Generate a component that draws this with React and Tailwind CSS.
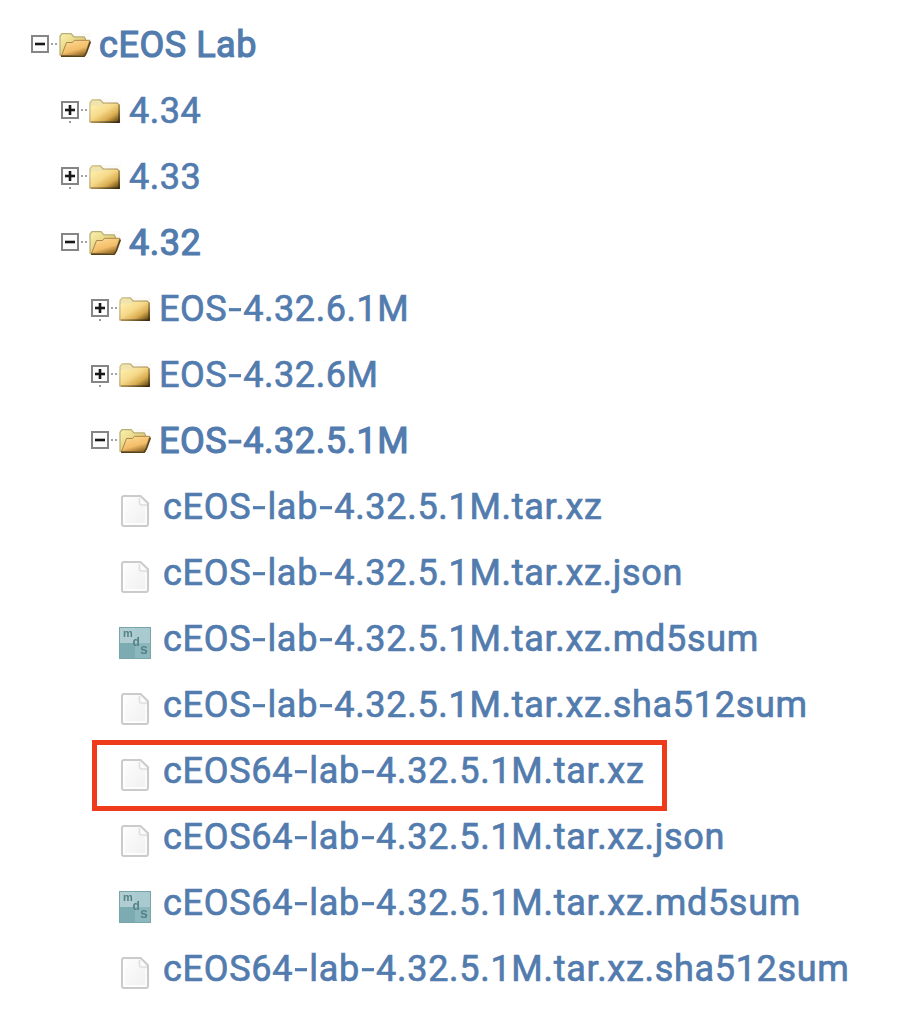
import React, { Fragment } from "react";

const tree = [
  { level: 0, type: "folder", open: true, name: "cEOS Lab" },
  { level: 1, type: "folder", name: "4.34" },
  { level: 1, type: "folder", name: "4.33" },
  { level: 1, type: "folder", open: true, name: "4.32" },
  { level: 2, type: "folder", name: "EOS-4.32.6.1M" },
  { level: 2, type: "folder", name: "EOS-4.32.6M" },
  { level: 2, type: "folder", open: true, name: "EOS-4.32.5.1M" },
  { type: "file", name: "cEOS-lab-4.32.5.1M.tar.xz" },
  { type: "file", name: "cEOS-lab-4.32.5.1M.tar.xz.json" },
  { type: "md5", name: "cEOS-lab-4.32.5.1M.tar.xz.md5sum" },
  { type: "file", name: "cEOS-lab-4.32.5.1M.tar.xz.sha512sum" },
  { type: "file", name: "cEOS64-lab-4.32.5.1M.tar.xz", highlighted: true },
  { type: "file", name: "cEOS64-lab-4.32.5.1M.tar.xz.json" },
  { type: "md5", name: "cEOS64-lab-4.32.5.1M.tar.xz.md5sum" },
  { type: "file", name: "cEOS64-lab-4.32.5.1M.tar.xz.sha512sum" },
];

const indent = ["pl-7", "pl-[58px]", "pl-[88px]"];

function Gradients() {
  return (
    <svg width="0" height="0" className="absolute" aria-hidden="true">
      <defs>
        <linearGradient id="closed" x1="0" y1="0" x2="1" y2="1">
          <stop offset="0" stopColor="#fff3b0" />
          <stop offset="0.45" stopColor="#f6d98a" />
          <stop offset="0.72" stopColor="#d9ac50" />
          <stop offset="1" stopColor="#5f430f" />
        </linearGradient>
        <linearGradient id="back" x1="0" y1="0" x2="1" y2="1">
          <stop offset="0" stopColor="#fbf3b0" />
          <stop offset="0.6" stopColor="#e2cd78" />
          <stop offset="1" stopColor="#8f7424" />
        </linearGradient>
        <linearGradient id="front" x1="0.2" y1="0" x2="0.75" y2="1">
          <stop offset="0" stopColor="#fddb92" />
          <stop offset="0.6" stopColor="#f3bd69" />
          <stop offset="1" stopColor="#8b611f" />
        </linearGradient>
        <linearGradient id="rim" x1="0" y1="0" x2="1" y2="1">
          <stop offset="0" stopColor="#cfc58d" />
          <stop offset="0.6" stopColor="#a28347" />
          <stop offset="1" stopColor="#352507" />
        </linearGradient>
        <linearGradient id="paper" x1="0" y1="0" x2="1" y2="1">
          <stop offset="0" stopColor="#fefefe" />
          <stop offset="1" stopColor="#efefef" />
        </linearGradient>
      </defs>
    </svg>
  );
}

function Toggle({ open }) {
  return (
    <svg width="30" height="32" viewBox="0 0 30 32" className="mb-[1.5px] shrink-0 blur-[0.45px]">
      <rect x="4" y="8" width="16" height="16" fill="#fcfcfc" stroke="#858585" strokeWidth="2" />
      <path d="M7 16h10" stroke="#181818" strokeWidth="2.6" />
      {!open && <path d="M12 11v10" stroke="#181818" strokeWidth="2.6" />}
      <path d="M23 16h2M27 16h2" stroke="#a2a2a2" strokeWidth="1.8" />
      {!open && <path d="M11 28h2" stroke="#999" strokeWidth="1.8" />}
    </svg>
  );
}

function Folder({ open }) {
  return (
    <svg width="34" height="32" viewBox="0 0 34 32" className="mb-[1.5px] shrink-0 blur-[0.55px]">
      <path d="M1 5h32v24H1z" fill="#fdfbf7" />
      {open ? (
        <>
          <path d="M2 27.2V8.3L4 5.7h9l3 3.2h10.2l1.3 2v16.3z" fill="url(#back)" stroke="#b5ac76" strokeWidth="1.2" />
          <path d="M3.5 27.5 8.5 14.5h6l2-2.2h15.4L26.5 27.5z" fill="url(#front)" stroke="#a9874d" strokeWidth="1" />
          <path d="M3 28.2h23.2l2.2-3.5 4-11.2" fill="none" stroke="#554018" strokeWidth="1.6" />
        </>
      ) : (
        <>
          <path d="M2 28V8.6L4.2 5.8h8.1l3 3.3h13.9l1.8 1.8V28z" fill="#efe3ae" stroke="url(#rim)" strokeWidth="1.2" />
          <path d="M2.6 27.6V12.7L4 11.5h9.4l2.8-1.7h13.5l.8 1v16.8z" fill="url(#closed)" />
          <path d="M31 10.5v17.6H3" fill="none" stroke="url(#rim)" strokeWidth="1.7" />
        </>
      )}
    </svg>
  );
}

function Page() {
  return (
    <svg width="32" height="32" viewBox="0 0 32 32" className="mt-2 shrink-0 blur-[0.5px]">
      <path d="M4.5 1h17L29 8.2V29a2 2 0 0 1-2 2H5a2 2 0 0 1-2-2V3a2 2 0 0 1 1.5-2z" fill="url(#paper)" stroke="#cbcbcb" strokeWidth="2.1" />
      <path d="M20.8 2v5.7q0 1.8 1.8 1.8H28z" fill="#fcfcfc" />
      <path d="M20.5 3v5q0 2 2 2H28" fill="none" stroke="#dedede" strokeWidth="1.6" />
      <path d="M5 3v26h22V12" fill="none" stroke="#fff" strokeWidth="1.4" />
    </svg>
  );
}

function Checksum() {
  return (
    <div className="relative mt-2 grid size-8 shrink-0 grid-cols-2 grid-rows-2 border border-[#79a4a9] font-['Liberation_Sans',sans-serif] leading-none font-bold tracking-normal text-[#568187] blur-[0.4px]">
      <span className="bg-[#b0ced1]" />
      <span className="bg-[#a9cbd0]" />
      <span className="bg-[#7cabb1]" />
      <span className="bg-[#8bb8bd]" />
      <span className="absolute top-0 left-[3px] text-[11px]">m</span>
      <span className="absolute top-[8px] left-[12.5px] text-[12px]">d</span>
      <span className="absolute top-[14px] left-[20px] text-[14px]">s</span>
    </div>
  );
}

function Label({ text }) {
  return text.split("-").map((part, i) => (
    <Fragment key={i}>
      {i > 0 && <span className="mr-[2.5px] ml-[3px] inline-block scale-x-130">-</span>}
      {part}
    </Fragment>
  ));
}

function Row({ item }) {
  const isFolder = item.type === "folder";
  return (
    <li className={`relative flex h-[66px] items-center ${isFolder ? indent[item.level] : "pl-[119px]"}`}>
      {isFolder ? (
        <>
          <Toggle open={item.open} />
          <Folder open={item.open} />
        </>
      ) : item.type === "md5" ? (
        <Checksum />
      ) : (
        <Page />
      )}
      <span
        className={`whitespace-nowrap ${isFolder ? "pl-[7px] tracking-[0.55px]" : "pl-3 tracking-[0.7px]"} ${
          item.open ? "[-webkit-text-stroke:1.2px_#527bae]" : "[-webkit-text-stroke:0.7px_#527bae]"
        }`}
      >
        <Label text={item.name} />
      </span>
      {item.highlighted && (
        <span className="absolute top-0.5 left-[92px] h-[71px] w-[575px] border-5 border-[#ee3b1c]" />
      )}
    </li>
  );
}

export default function App() {
  return (
    <main className="h-[1014px] w-[914px] overflow-hidden bg-white pt-3 font-['Roboto',sans-serif] text-[36px] leading-[66px] text-[#527bae]">
      <Gradients />
      <ul>
        {tree.map((item) => (
          <Row key={item.name} item={item} />
        ))}
      </ul>
    </main>
  );
}
